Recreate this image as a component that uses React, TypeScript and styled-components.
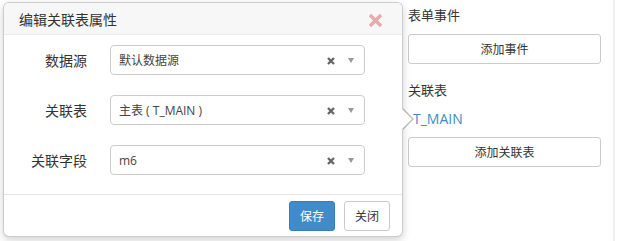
import React from 'react';
import styled, { createGlobalStyle } from 'styled-components';

const GlobalStyle = createGlobalStyle`
  html, body {
    margin: 0;
    padding: 0;
    background: #fff;
  }
  body {
    font-family: "Open Sans", "Noto Sans CJK SC", sans-serif;
    color: #333;
  }
`;

interface FieldProps {
  label: string;
  value: string;
}

const fields: FieldProps[] = [
  { label: '数据源', value: '默认数据源' },
  { label: '关联表', value: '主表 ( T_MAIN )' },
  { label: '关联字段', value: 'm6' },
];

const Field: React.FC<FieldProps> = ({ label, value }) => (
  <Row>
    <Label>{label}</Label>
    <Select>
      <SelectText>{value}</SelectText>
      <ClearIcon viewBox="0 0 8 8">
        <path d="M1 1 L7 7 M7 1 L1 7" />
      </ClearIcon>
      <Caret />
    </Select>
  </Row>
);

const App: React.FC = () => {
  return (
    <Page>
      <GlobalStyle />
      <Popover>
        <Arrow />
        <Header>
          <Title>编辑关联表属性</Title>
          <CloseIcon viewBox="0 0 12 12">
            <path d="M2 2 L10 10 M10 2 L2 10" />
          </CloseIcon>
        </Header>
        <Body>
          {fields.map((f) => (
            <Field key={f.label} {...f} />
          ))}
        </Body>
        <Footer>
          <Button primary>保存</Button>
          <Button>关闭</Button>
        </Footer>
      </Popover>
      <Side>
        <SideTitle>表单事件</SideTitle>
        <BlockButton>添加事件</BlockButton>
        <SideTitle>关联表</SideTitle>
        <Link>T_MAIN</Link>
        <BlockButton>添加关联表</BlockButton>
      </Side>
      <Divider />
    </Page>
  );
};

export default App;

const Page = styled.div`
  display: flex;
  width: 618px;
  height: 241px;
  overflow: hidden;
`;

const Popover = styled.div`
  position: relative;
  z-index: 2;
  margin: 2px 0 0 3px;
  width: 400px;
  height: 235px;
  box-sizing: border-box;
  display: flex;
  flex-direction: column;
  background: #fff;
  border: 1px solid rgba(0, 0, 0, 0.2);
  border-radius: 6px;
  box-shadow: 0 3px 8px rgba(0, 0, 0, 0.18);
`;

const Arrow = styled.div`
  position: absolute;
  right: -12px;
  top: 105px;
  width: 0;
  height: 0;
  border-style: solid;
  border-width: 11px 0 11px 11px;
  border-color: transparent transparent transparent rgba(0, 0, 0, 0.25);
  &::after {
    content: '';
    position: absolute;
    left: -12px;
    top: -10px;
    border-style: solid;
    border-width: 10px 0 10px 10px;
    border-color: transparent transparent transparent #fff;
  }
`;

const Header = styled.div`
  height: 31px;
  display: flex;
  align-items: center;
  justify-content: space-between;
  padding: 0 20px 0 15px;
  background: #f7f7f7;
  border-bottom: 1px solid #ebebeb;
  border-radius: 5px 5px 0 0;
`;

const Title = styled.h3`
  margin: 0;
  font-size: 14px;
  font-weight: normal;
  color: #333;
`;

const CloseIcon = styled.svg`
  width: 13px;
  height: 13px;
  margin-top: 3px;
  stroke: #e8abab;
  stroke-width: 3.2;
  stroke-linecap: square;
`;

const Body = styled.div`
  flex: 1;
  display: flex;
  flex-direction: column;
  gap: 20px;
  padding: 10px 0 0 0;
`;

const Row = styled.div`
  display: flex;
  align-items: center;
`;

const Label = styled.label`
  width: 83px;
  text-align: right;
  font-size: 14px;
  color: #333;
  margin-right: 23px;
`;

const Select = styled.div`
  width: 255px;
  height: 30px;
  box-sizing: border-box;
  display: flex;
  align-items: center;
  padding: 0 10px 0 8px;
  border: 1px solid #ccc;
  border-radius: 4px;
  background: #fff;
`;

const SelectText = styled.span`
  flex: 1;
  font-size: 12px;
  color: #444;
`;

const ClearIcon = styled.svg`
  width: 8px;
  height: 8px;
  stroke: #666;
  stroke-width: 2.4;
  margin-right: 13px;
  margin-top: 2px;
`;

const Caret = styled.span`
  width: 0;
  height: 0;
  border-style: solid;
  border-width: 5px 3px 0 3px;
  border-color: #999 transparent transparent transparent;
`;

const Footer = styled.div`
  height: 41px;
  display: flex;
  align-items: center;
  justify-content: flex-end;
  gap: 9px;
  padding: 0 12px 0 0;
  border-top: 1px solid #e5e5e5;
`;

const Button = styled.button<{ primary?: boolean }>`
  width: 46px;
  height: 30px;
  padding: 0;
  font-family: "Open Sans", "Noto Sans CJK SC", sans-serif;
  font-size: 12px;
  border-radius: 3px;
  border: 1px solid ${(p) => (p.primary ? '#357ebd' : '#ccc')};
  background: ${(p) => (p.primary ? '#428bca' : '#fff')};
  color: ${(p) => (p.primary ? '#fff' : '#333')};
`;

const Side = styled.div`
  width: 193px;
  margin-left: 2px;
  padding-left: 3px;
  padding-top: 6px;
  display: flex;
  flex-direction: column;
`;

const SideTitle = styled.div`
  font-size: 13px;
  color: #333;
  line-height: 18px;
  margin-bottom: 10px;
`;

const BlockButton = styled.button`
  width: 193px;
  height: 30px;
  box-sizing: border-box;
  font-family: "Open Sans", "Noto Sans CJK SC", sans-serif;
  font-size: 12px;
  color: #333;
  background: #fff;
  border: 1px solid #ccc;
  border-radius: 3px;
  margin-bottom: 17px;
`;

const Link = styled.a`
  font-size: 14px;
  color: #428bca;
  line-height: 20px;
  margin: 0 0 8px 5px;
`;

const Divider = styled.div`
  width: 2px;
  height: 100%;
  margin-left: 12px;
  background: #eee;
`;
